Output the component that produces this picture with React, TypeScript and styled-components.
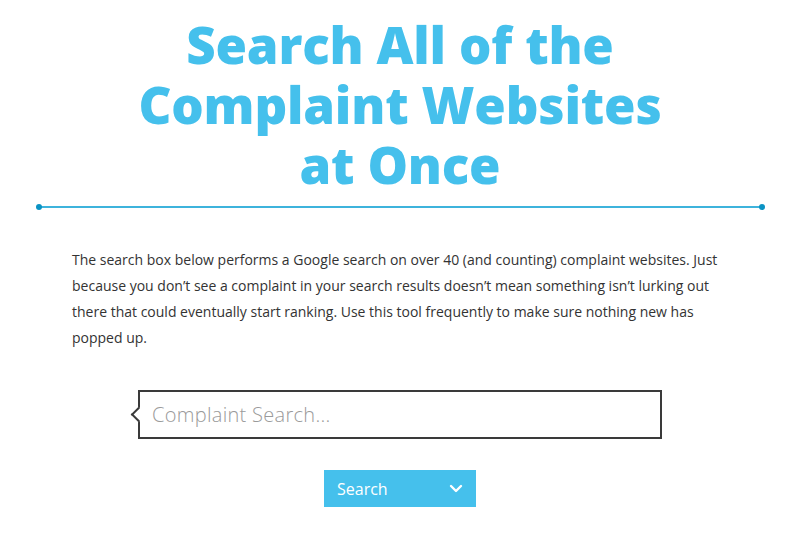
import React from "react";
import styled, { createGlobalStyle } from "styled-components";

const GlobalStyle = createGlobalStyle`
    body {
        margin: 0;
        background: #ffffff;
        font-family: "Open Sans", Lato, sans-serif;
    }
`;

const Page = styled.div`
    display: flex;
    flex-direction: column;
    align-items: center;
    padding-top: 14px;
`;

const Title = styled.h1`
    margin: 0;
    text-align: center;
    color: #45c0ec;
    font-family: "Open Sans", sans-serif;
    font-weight: 800;
    font-size: 51px;
    line-height: 60px;
    letter-spacing: -0.2px;
`;

const Divider = styled.div`
    position: relative;
    width: 723px;
    height: 2px;
    margin-top: 12px;
    background: #3eb3dc;
    &::before,
    &::after {
        content: "";
        position: absolute;
        top: -2px;
        width: 6px;
        height: 6px;
        border-radius: 50%;
        background: #0a93c4;
    }
    &::before { left: -3px; }
    &::after { right: -3px; }
`;

const Intro = styled.p`
    width: 656px;
    margin: 39px 0 0;
    color: #333333;
    font-size: 14px;
    line-height: 26px;
`;

const SearchBox = styled.div`
    position: relative;
    box-sizing: border-box;
    width: 524px;
    height: 49px;
    margin-top: 39px;
    border: 2px solid #3a3a3a;
    display: flex;
    align-items: center;
    padding-left: 10px;
    &::before {
        content: "";
        position: absolute;
        left: -7px;
        top: 17px;
        width: 9px;
        height: 9px;
        background: #fff;
        border-left: 2px solid #3a3a3a;
        border-bottom: 2px solid #3a3a3a;
        transform: rotate(45deg);
    }
`;

const SearchInput = styled.input`
    border: none;
    outline: none;
    flex: 1;
    background: transparent;
    font-family: "Open Sans", sans-serif;
    font-weight: 300;
    font-size: 20px;
    letter-spacing: 0.3px;
    color: #333;
    &::placeholder {
        color: #9a9a9a;
    }
`;

const Button = styled.button`
    margin-top: 31px;
    width: 152px;
    height: 37px;
    border: none;
    background: #45c0ec;
    color: #ffffff;
    display: flex;
    align-items: center;
    justify-content: space-between;
    padding: 0 13px 0 13px;
    font-family: "Open Sans", sans-serif;
    font-size: 16px;
    cursor: pointer;
`;

const App: React.FC = () => {
    return (
        <>
            <GlobalStyle />
            <Page>
                <Title>
                    Search All of the<br />
                    Complaint Websites<br />
                    at Once
                </Title>
                <Divider />
                <Intro>
                    The search box below performs a Google search on over 40 (and counting) complaint websites. Just
                    because you don’t see a complaint in your search results doesn’t mean something isn’t lurking out
                    there that could eventually start ranking. Use this tool frequently to make sure nothing new has
                    popped up.
                </Intro>
                <SearchBox>
                    <SearchInput placeholder="Complaint Search..." />
                </SearchBox>
                <Button>
                    Search
                    <svg width="14" height="9" viewBox="0 0 14 9" fill="none">
                        <path d="M2 2l5 5 5-5" stroke="#fff" strokeWidth="2.4" strokeLinecap="round" strokeLinejoin="round" />
                    </svg>
                </Button>
            </Page>
        </>
    );
};

export default App;
